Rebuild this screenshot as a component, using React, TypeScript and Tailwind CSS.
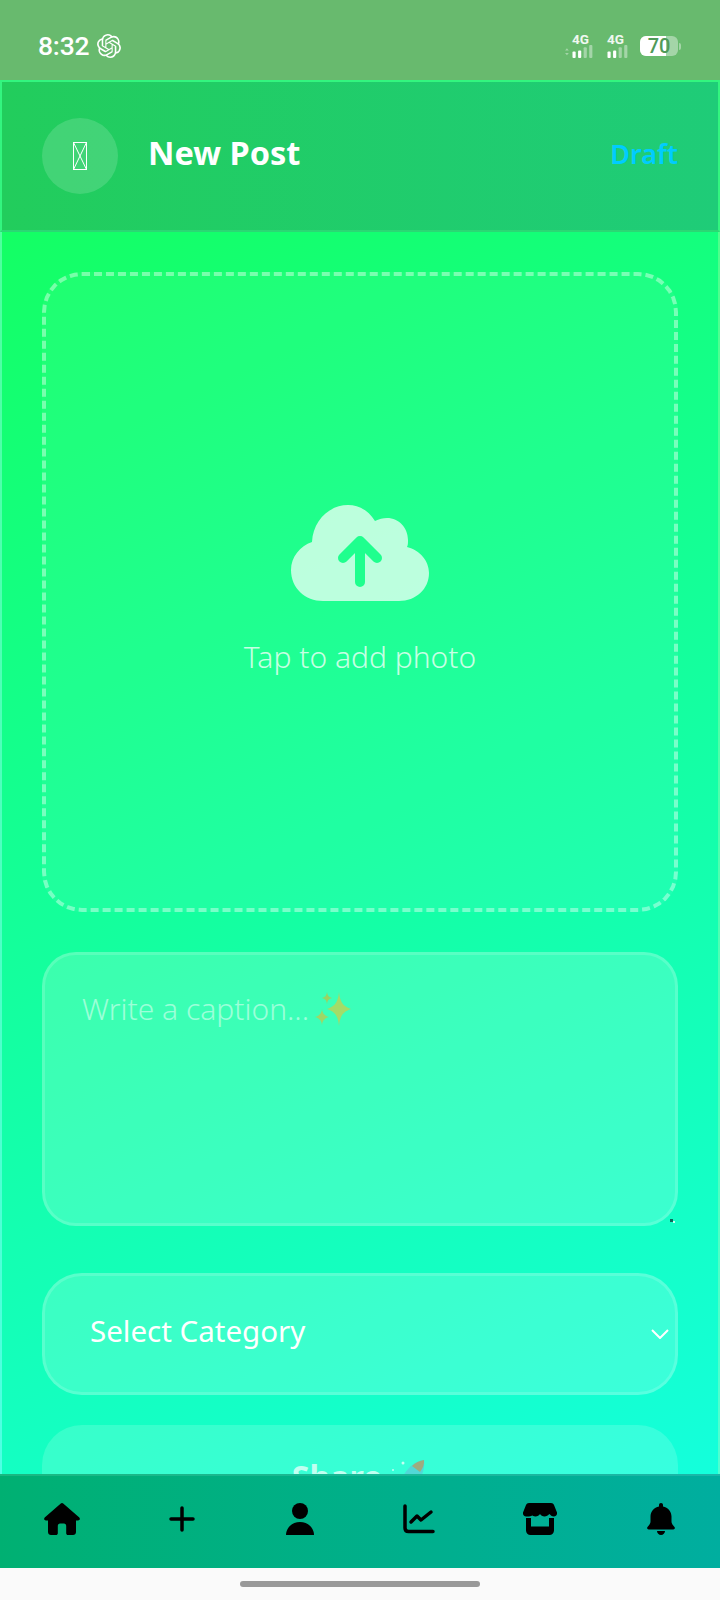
import { SiOpenai } from "react-icons/si";

const sans = "font-['Noto_Sans','Open_Sans',sans-serif]";

function Signal({ arrows }: { arrows?: boolean }) {
  return (
    <div className="relative flex h-[24px] w-[30px] flex-col items-end">
      <span className="mr-[5px] font-['Roboto',sans-serif] text-[13.5px] leading-[11px] font-bold text-white/90">4G</span>
      <svg width="30" height="14" viewBox="0 0 30 14" className="mt-auto">
        {arrows && <path d="M2 3.5 4 6H0ZM2 11 4 8.5H0Z" fill="#fff" fillOpacity=".4" />}
        <rect x="8" y="7" width="3.4" height="7" rx="1" fill="#fff" />
        <rect x="14" y="6" width="3.4" height="8" rx="1" fill="#fff" />
        <rect x="20" y="2.5" width="3.4" height="11.5" rx="1" fill="#fff" fillOpacity=".4" />
        <rect x="26" y="0" width="3.4" height="14" rx="1" fill="#fff" fillOpacity=".4" />
      </svg>
    </div>
  );
}

function Battery() {
  return (
    <div className="flex items-center">
      <div className="relative flex h-[20px] w-[38px] items-center justify-center rounded-[6px] bg-white/40">
        <div className="absolute inset-y-0 left-0 w-[26px] rounded-l-[6px] bg-white" />
        <span className="relative font-['Roboto',sans-serif] text-[20px] leading-none font-medium text-[#4f9a58]">70</span>
      </div>
      <div className="ml-[1px] h-[7px] w-[2px] rounded-r-sm bg-white/40" />
    </div>
  );
}

function Sparkles() {
  return (
    <svg width="36" height="36" viewBox="0 0 36 36" className="mt-[3px] ml-[6px] opacity-60">
      <path d="M24 0c1 9 3 14 12 17-9 3-11 8-12 17-1-9-3-14-12-17 9-3 11-8 12-17Z" fill="#e8c534" />
      <path d="M12 0c.6 3.500 1.500 5 5 6-3.500 1-4.400 2.500-5 6-.6-3.500-1.500-5-5-6 3.500-1 4.400-2.500 5-6Z" fill="#d8b82c" />
      <path d="M7 17c.5 4 2 6.500 7 8-5 1.500-6.500 4-7 8-.5-4-2-6.500-7-8 5-1.500 6.500-4 7-8Z" fill="#e0bd30" />
    </svg>
  );
}

function Rocket() {
  return (
    <svg width="36" height="48" viewBox="0 0 36 48" className="-mt-[5px] ml-[10px] opacity-70">
      <path d="M32 4c-9 1-17 8-22 18l-3 8 9 6 7-6c7-8 10-17 9-26Z" fill="#5cc8d8" />
      <path d="M32 4c-4 .5-9 3-12 6l8 6c3-4 4.500-8 4-12Z" fill="#c98a5a" />
      <circle cx="19" cy="23" r="3.500" fill="#13806f" />
      <circle cx="11" cy="7" r="1.500" fill="#fff" />
      <circle cx="1" cy="14" r="1" fill="#fff" />
    </svg>
  );
}

function Icon({ children, className }: { children: React.ReactNode; className?: string }) {
  return <div className={`flex items-center justify-center ${className ?? ""}`}>{children}</div>;
}

export default function App() {
  return (
    <div className={`flex h-[1600px] w-[720px] flex-col overflow-hidden bg-[#fafafa] ${sans}`}>
      <header className="flex h-[80px] shrink-0 items-center justify-between bg-[#68ba6e] pt-[12px] pr-[39px] pl-[38px] text-white">
        <div className="flex items-center gap-[8px]">
          <span className="font-['Roboto',sans-serif] text-[26.500px] leading-none font-medium tracking-[-0.2px]">8:32</span>
          <SiOpenai size={24} />
        </div>
        <div className="flex items-center">
          <Signal arrows />
          <div className="w-[13px]" />
          <div className="-ml-[8px]"><Signal /></div>
          <div className="w-[11px]" />
          <Battery />
        </div>
      </header>

      <div className="flex h-[1488px] shrink-0 flex-col overflow-hidden">
        <section className="flex h-[152px] shrink-0 items-center justify-between border-x-2 border-t-2 border-b-2 border-t-[#33f57f] border-r-[#33f57f] border-b-[#2bd874] border-l-[#33f57f] bg-linear-to-r from-[#22cd5c] to-[#1fcc78] pr-[40px] pl-[40px]">
          <div className="flex items-center gap-[30px]">
            <div className="flex h-[76px] w-[76px] items-center justify-center rounded-full bg-white/15">
              <svg width="14" height="28" viewBox="0 0 14 28" fill="none" stroke="#fff" strokeWidth="1">
                <rect x=".5" y=".5" width="13" height="27" />
                <path d="M.5.5l13 27M13.500.5l-13 27" />
              </svg>
            </div>
            <h1 className="pb-[6px] text-[32.500px] leading-none font-bold text-white">New Post</h1>
          </div>
          <span className="pb-[6px] text-[27px] leading-none font-semibold text-[#00ccff]">Draft</span>
        </section>

        <main className="flex min-h-0 flex-1 flex-col overflow-hidden border-x-2 border-x-white/25 bg-linear-[155deg] from-[#14ff64] to-[#14ffdc] px-[40px] pt-[40px]">
          <div className="flex h-[640px] shrink-0 flex-col items-center rounded-[40px] border-[4px] border-dashed border-white/40 bg-white/5 pt-[229px]">
            <svg width="138" height="96" viewBox="0 0 138 96">
              <path d="M32 96C14 96 0 83 0 65C0 52 9 41 21 37C22 16 38 0 57 0C68 0 78 6 84 16C88 14 92 13 96 13C108 13 117 23 117 35C117 38 117 40 116 42C129 45 138 56 138 68C138 84 125 96 108 96Z" fill="#fff" fillOpacity=".7" />
              <path d="M69 77V37M52 53l17-17 17 17" fill="none" stroke="#1fff8e" strokeWidth="10" strokeLinecap="round" strokeLinejoin="round" />
            </svg>
            <p className="mt-[36px] text-[30px] leading-[40px] font-light text-white/75">Tap to add photo</p>
          </div>

          <div className="relative mt-[40px] flex h-[274px] shrink-0 items-start rounded-[34px] border-[3px] border-white/15 bg-white/[0.17] pt-[34px] pl-[37px]">
            <span className="text-[30px] leading-[40px] font-light text-white/50">Write a caption...</span>
            <Sparkles />
            <svg width="5" height="4" viewBox="0 0 5 4" className="absolute right-0 bottom-0">
              <rect x="0" y="0" width="3" height="3" fill="#0b6b5c" />
              <rect x="3" y="2" width="2" height="2" fill="#c8fff0" />
            </svg>
          </div>

          <div className="mt-[47px] flex h-[122px] shrink-0 items-center justify-between rounded-[40px] border-[3px] border-white/15 bg-white/[0.17] pr-[6px] pl-[45px]">
            <span className="pb-[6px] text-[29.500px] leading-none text-white">Select Category</span>
            <svg width="18" height="10" viewBox="0 0 18 10" fill="none" stroke="#fff" strokeWidth="2"><path d="M1 1l8 8 8-8" /></svg>
          </div>

          <button className="mt-[30px] flex h-[122px] w-full shrink-0 items-start justify-center rounded-[40px] bg-white/15 pt-[36px] text-[32px] leading-none font-bold text-white/70">
            Share <Rocket />
          </button>
        </main>

        <nav className="grid h-[94px] shrink-0 grid-cols-6 items-center border-t-2 border-white/10 bg-linear-to-r from-[#00b072] to-[#00ae9f] px-[2px] pb-[6px] text-black">
          <Icon>
            <svg width="36" height="32" viewBox="0 0 36 32"><path d="M16.500.7c.9-.8 2.100-.8 3 0l15.800 13.700c1.200 1.300.4 3.100-1.300 3.100H32v11.500c0 1.700-1.300 3-3 3h-5c-1 0-1.800-.8-1.800-1.800v-7.400c0-1.200-1-2.200-2.200-2.200h-4c-1.200 0-2.200 1-2.200 2.200v7.400c0 1-.8 1.800-1.800 1.800H7c-1.700 0-3-1.300-3-3V17.500H2c-1.700 0-2.500-1.800-1.300-3.100Z" /></svg>
          </Icon>
          <Icon className="ml-[3px]">
            <svg width="26" height="26" viewBox="0 0 26 26" fill="none" stroke="#000" strokeWidth="3.500" strokeLinecap="round"><path d="M13 2v22M2 13h22" /></svg>
          </Icon>
          <Icon>
            <svg width="28" height="32" viewBox="0 0 28 32"><circle cx="14" cy="8" r="8" /><path d="M0 32c0-7 6-13 14-13s14 6 14 13Z" /></svg>
          </Icon>
          <Icon className="-ml-[2px]">
            <svg width="32" height="30" viewBox="0 0 32 30" fill="none" stroke="#000" strokeWidth="3.500" strokeLinecap="round" strokeLinejoin="round"><path d="M2 2v22c0 2 1 3.500 3.500 3.500H30" /><path d="M8 18l6-6 4 4 10-8" /></svg>
          </Icon>
          <Icon className="ml-[2px]">
            <svg width="34" height="32" viewBox="0 0 34 32"><path d="M6 0h22c1.500 0 2.500.8 3 2l3 7.500c.5 2-1 4-3 4-2.200 0-3.500-1.500-4.700-2.600-1.200 1.200-2.800 2.600-4.800 2.600s-3.600-1.400-4.500-2.600c-.9 1.200-2.500 2.600-4.500 2.600s-3.600-1.400-4.800-2.600C11.500 12 8.200 13.500 6 13.500H3c-2 0-3.500-2-3-4L3 2C3.500.8 4.500 0 6 0Z" /><path d="M3 15h5v8.500h18V15h5v12.500c0 2.500-2 4.500-4.500 4.500h-19C5 32 3 30 3 27.500Z" /></svg>
          </Icon>
          <Icon className="ml-[6px]">
            <svg width="28" height="32" viewBox="0 0 28 32"><path d="M14 0c1.200 0 2 .8 2 2v1.500c5 1 8.500 5 8.500 10v5c0 2 1.500 4 3 5.500.8 1 .2 2.500-1.200 2.500H1.700C.3 26.500-.3 25 .5 24c1.500-1.500 3-3.500 3-5.500v-5c0-5 3.500-9 8.500-10V2c0-1.200.8-2 2-2Z" /><path d="M10 28h8c0 2-1.800 4-4 4s-4-2-4-4Z" /></svg>
          </Icon>
        </nav>
      </div>

      <div className="flex flex-1 items-center justify-center">
        <div className="h-[6px] w-[240px] rounded-full bg-[#999]" />
      </div>
    </div>
  );
}
